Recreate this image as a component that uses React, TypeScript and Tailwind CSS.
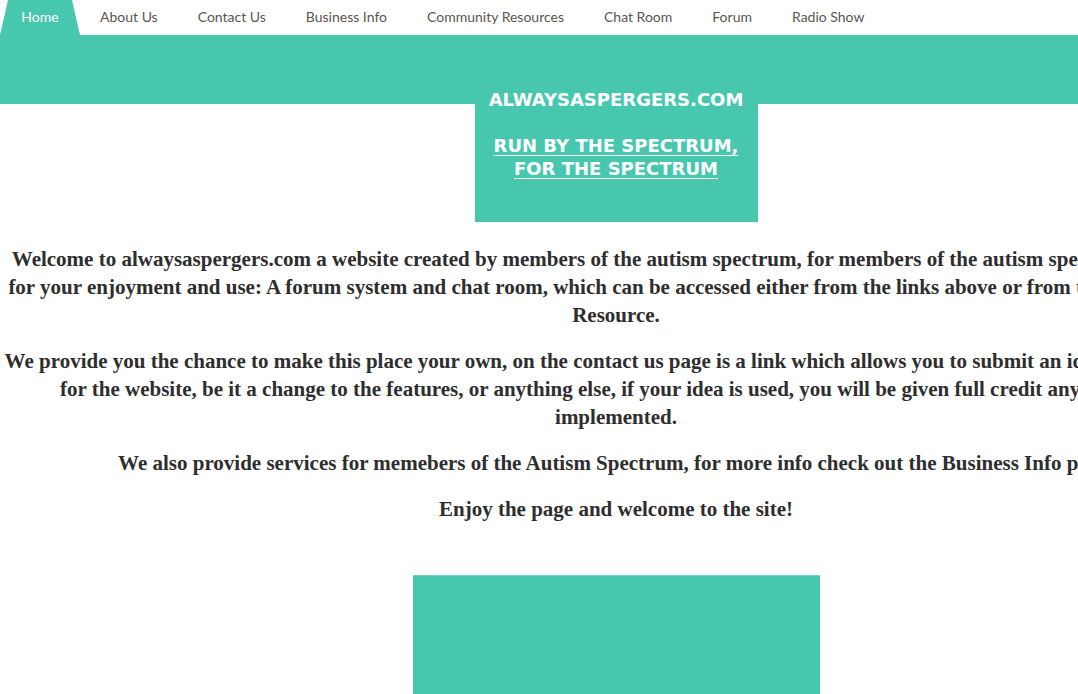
import React from "react";

const links = ["About Us", "Contact Us", "Business Info", "Community Resources", "Chat Room", "Forum", "Radio Show"];

export default function App() {
  return (
    <div className="w-[1232px] bg-white">
      {/* top navigation */}
      <nav className="flex h-[35px] items-stretch bg-white pb-[2px] font-['Lato',sans-serif] text-[14px]">
        <a className="mb-[-2px] flex w-[80px] items-center justify-center bg-[#47c8ae] pb-[2px] text-white [clip-path:polygon(10%_0,90%_0,100%_100%,0_100%)]">
          Home
        </a>
        {links.map((l) => (
          <a key={l} className="flex items-center px-[20px] text-[#5b5552]">
            {l}
          </a>
        ))}
      </nav>
      <div className="h-[69px] bg-[#47c8ae]" />

      <div className="flex justify-center">
        <div className="mt-[-20px] h-[138px] w-[283px] bg-[#47c8ae] pt-[4px] text-center font-['DejaVu_Sans',sans-serif] text-[18px] font-bold leading-[23px] text-white">
          <p>ALWAYSASPERGERS.COM</p>
          <p className="mt-[23px] underline underline-offset-[3px]">
            RUN BY THE SPECTRUM,
            <br />
            FOR THE SPECTRUM
          </p>
        </div>
      </div>

      <div className="mt-[23px] text-center font-['Liberation_Serif',serif] text-[21px] font-bold leading-[28px] text-[#2e2e2e] whitespace-nowrap">
        <p>
          Welcome to alwaysaspergers.com a website created by members of the autism spectrum, for members of the autism spectrum. We offer
          <br />
          for your enjoyment and use: A forum system and chat room, which can be accessed either from the links above or from the Community:
          <br />
          Resource.
        </p>
        <p className="mt-[18px]">
          We provide you the chance to make this place your own, on the contact us page is a link which allows you to submit an idea or suggestion
          <br />
          for the website, be it a change to the features, or anything else, if your idea is used, you will be given full credit anywhere it is
          <br />
          implemented.
        </p>
        <p className="mt-[18px]">
          We also provide services for memebers of the Autism Spectrum, for more info check out the Business Info page.
        </p>
        <p className="mt-[18px]">Enjoy the page and welcome to the site!</p>
      </div>

      <div className="flex justify-center pt-[52px]">
        <div className="h-[160px] w-[407px] border-t border-[#6fd6c1] bg-[#47c8ae]" />
      </div>
    </div>
  );
}
